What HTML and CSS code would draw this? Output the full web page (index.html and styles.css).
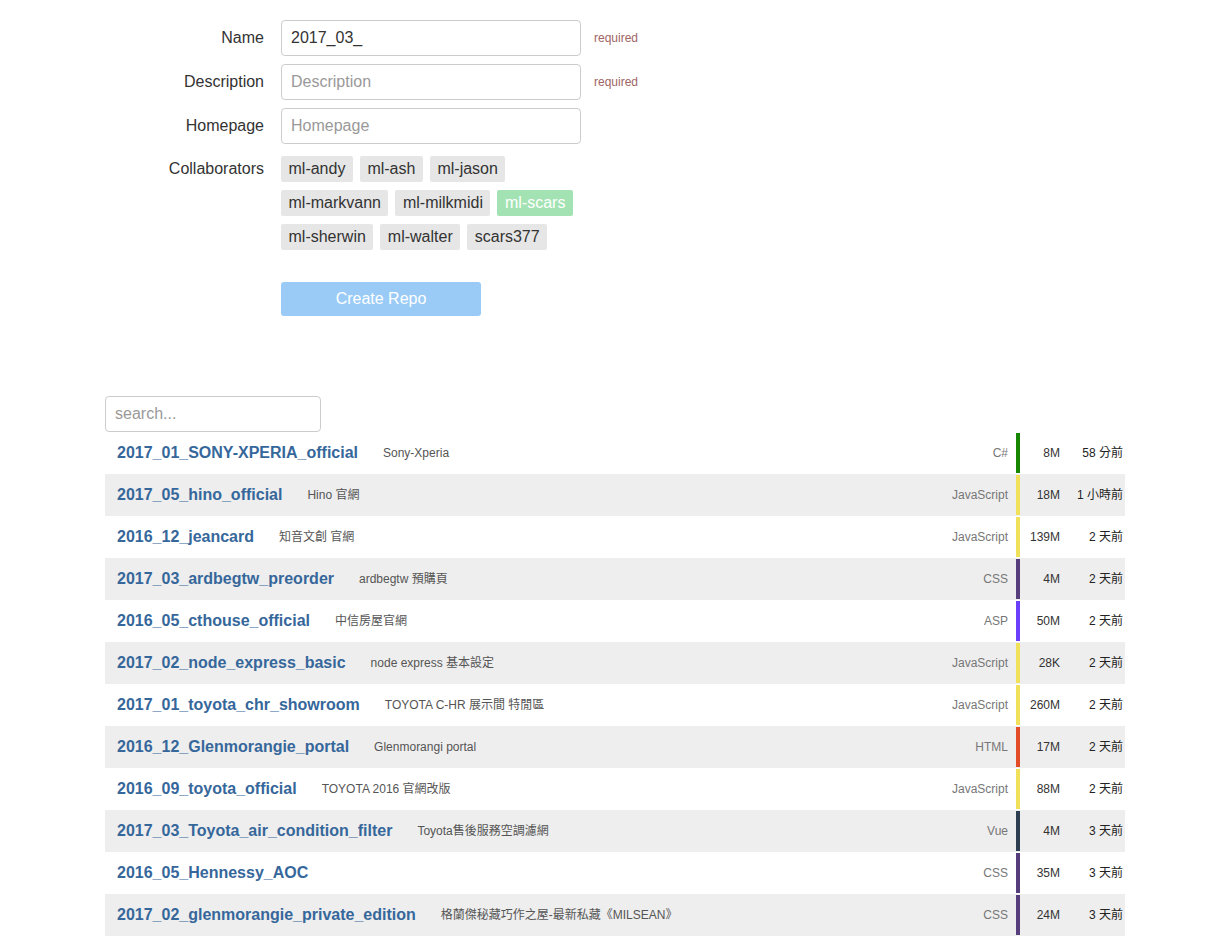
FILE: index.html
```html
<!DOCTYPE html>
<html>
<head>
<meta charset="utf-8">
<link rel="stylesheet" href="styles.css">
</head>
<body>
<form class="form">
  <label class="label">Name</label>
  <input class="input" type="text" value="2017_03_">
  <span class="req">required</span>

  <label class="label">Description</label>
  <input class="input" type="text" placeholder="Description">
  <span class="req">required</span>

  <label class="label">Homepage</label>
  <input class="input" type="text" placeholder="Homepage">
  <span></span>

  <label class="label label-top">Collaborators</label>
  <div class="tags">
    <span class="tag">ml-andy</span>
    <span class="tag">ml-ash</span>
    <span class="tag">ml-jason</span>
    <span class="tag">ml-markvann</span>
    <span class="tag">ml-milkmidi</span>
    <span class="tag tag-on">ml-scars</span>
    <span class="tag">ml-sherwin</span>
    <span class="tag">ml-walter</span>
    <span class="tag">scars377</span>
  </div>
  <span></span>

  <span></span>
  <div class="btn-cell"><button type="button" class="btn">Create Repo</button></div>
  <span></span>
</form>

<section class="repos">
  <input class="search" type="text" placeholder="search...">
  <div class="list">
    <div class="row"><a class="name">2017_01_SONY-XPERIA_official</a><span class="desc">Sony-Xperia</span><span class="lang">C#</span><span class="bar c-cs"></span><span class="size">8M</span><span class="time">58 分前</span></div>
    <div class="row"><a class="name">2017_05_hino_official</a><span class="desc">Hino 官網</span><span class="lang">JavaScript</span><span class="bar c-js"></span><span class="size">18M</span><span class="time">1 小時前</span></div>
    <div class="row"><a class="name">2016_12_jeancard</a><span class="desc">知音文創 官網</span><span class="lang">JavaScript</span><span class="bar c-js"></span><span class="size">139M</span><span class="time">2 天前</span></div>
    <div class="row"><a class="name">2017_03_ardbegtw_preorder</a><span class="desc">ardbegtw 預購頁</span><span class="lang">CSS</span><span class="bar c-css"></span><span class="size">4M</span><span class="time">2 天前</span></div>
    <div class="row"><a class="name">2016_05_cthouse_official</a><span class="desc">中信房屋官網</span><span class="lang">ASP</span><span class="bar c-asp"></span><span class="size">50M</span><span class="time">2 天前</span></div>
    <div class="row"><a class="name">2017_02_node_express_basic</a><span class="desc">node express 基本設定</span><span class="lang">JavaScript</span><span class="bar c-js"></span><span class="size">28K</span><span class="time">2 天前</span></div>
    <div class="row"><a class="name">2017_01_toyota_chr_showroom</a><span class="desc">TOYOTA C-HR 展示間 特閒區</span><span class="lang">JavaScript</span><span class="bar c-js"></span><span class="size">260M</span><span class="time">2 天前</span></div>
    <div class="row"><a class="name">2016_12_Glenmorangie_portal</a><span class="desc">Glenmorangi portal</span><span class="lang">HTML</span><span class="bar c-html"></span><span class="size">17M</span><span class="time">2 天前</span></div>
    <div class="row"><a class="name">2016_09_toyota_official</a><span class="desc">TOYOTA 2016 官網改版</span><span class="lang">JavaScript</span><span class="bar c-js"></span><span class="size">88M</span><span class="time">2 天前</span></div>
    <div class="row"><a class="name">2017_03_Toyota_air_condition_filter</a><span class="desc">Toyota售後服務空調濾網</span><span class="lang">Vue</span><span class="bar c-vue"></span><span class="size">4M</span><span class="time">3 天前</span></div>
    <div class="row"><a class="name">2016_05_Hennessy_AOC</a><span class="desc"></span><span class="lang">CSS</span><span class="bar c-css"></span><span class="size">35M</span><span class="time">3 天前</span></div>
    <div class="row"><a class="name">2017_02_glenmorangie_private_edition</a><span class="desc">格蘭傑秘藏巧作之屋-最新私藏《MILSEAN》</span><span class="lang">CSS</span><span class="bar c-css"></span><span class="size">24M</span><span class="time">3 天前</span></div>
  </div>
</section>
</body>
</html>
```

FILE: styles.css
```css
* { box-sizing: border-box; }

body {
  margin: 0;
  font-family: "Liberation Sans", Arial, "Noto Sans CJK TC", sans-serif;
  color: #333;
  background: #fff;
}

.form {
  display: grid;
  grid-template-columns: 264px 300px auto;
  column-gap: 17px;
  row-gap: 8px;
  align-items: center;
  padding-top: 20px;
  margin: 0;
}

.label {
  text-align: right;
  font-size: 16px;
  color: #333;
}

.label-top {
  align-self: start;
  line-height: 26px;
  padding-top: 4px;
}

.input {
  width: 300px;
  height: 36px;
  border: 1px solid #ccc;
  border-radius: 4px;
  padding: 0 9px;
  font-family: inherit;
  font-size: 16px;
  color: #333;
  outline: none;
}

.input::placeholder,
.search::placeholder {
  color: #999;
}

.req {
  font-size: 12px;
  color: #a06464;
  margin-left: -4px;
}

.tags {
  display: flex;
  flex-wrap: wrap;
  column-gap: 7px;
  row-gap: 8px;
  padding-top: 4px;
  width: 300px;
}

.tag {
  background: #e6e6e6;
  color: #333;
  font-size: 16px;
  line-height: 26px;
  height: 26px;
  padding: 0 7.5px;
  border-radius: 2px;
}

.tag-on {
  background: #a3e3b3;
  color: #fff;
}

.btn-cell {
  margin-top: 24px;
}

.btn {
  width: 200px;
  height: 34px;
  border: none;
  border-radius: 3px;
  background: #9acbf7;
  color: #fff;
  font-family: inherit;
  font-size: 16px;
  padding: 0;
}

.repos {
  margin: 80px 0 0 105px;
  width: 1020px;
}

.search {
  display: block;
  width: 216px;
  height: 36px;
  border: 1px solid #ccc;
  border-radius: 4px;
  padding: 0 9px;
  font-family: inherit;
  font-size: 16px;
  outline: none;
}

.list {
  display: flex;
  flex-direction: column;
}

.row {
  display: flex;
  align-items: center;
  height: 42px;
  padding-left: 12px;
}

.row:nth-child(even) {
  background: #eee;
}

.name {
  font-size: 16px;
  font-weight: bold;
  color: #36679b;
  white-space: nowrap;
}

.desc {
  flex: 1;
  margin-left: 25px;
  font-size: 12px;
  line-height: 14px;
  color: #555;
  white-space: nowrap;
}

.lang {
  font-size: 12px;
  color: #777;
  padding-right: 8px;
  text-align: right;
}

.bar {
  width: 4px;
  align-self: stretch;
  margin: 1px 0;
}

.size {
  width: 48px;
  text-align: right;
  padding-right: 8px;
  font-size: 12px;
  color: #333;
}

.time {
  width: 57px;
  text-align: right;
  padding-right: 2px;
  font-size: 12px;
  line-height: 14px;
  color: #222;
}

.c-cs { background: #178600; }
.c-js { background: #f1e05a; }
.c-css { background: #563d7c; }
.c-asp { background: #6a40fd; }
.c-html { background: #e34c26; }
.c-vue { background: #2c3e50; }
```
